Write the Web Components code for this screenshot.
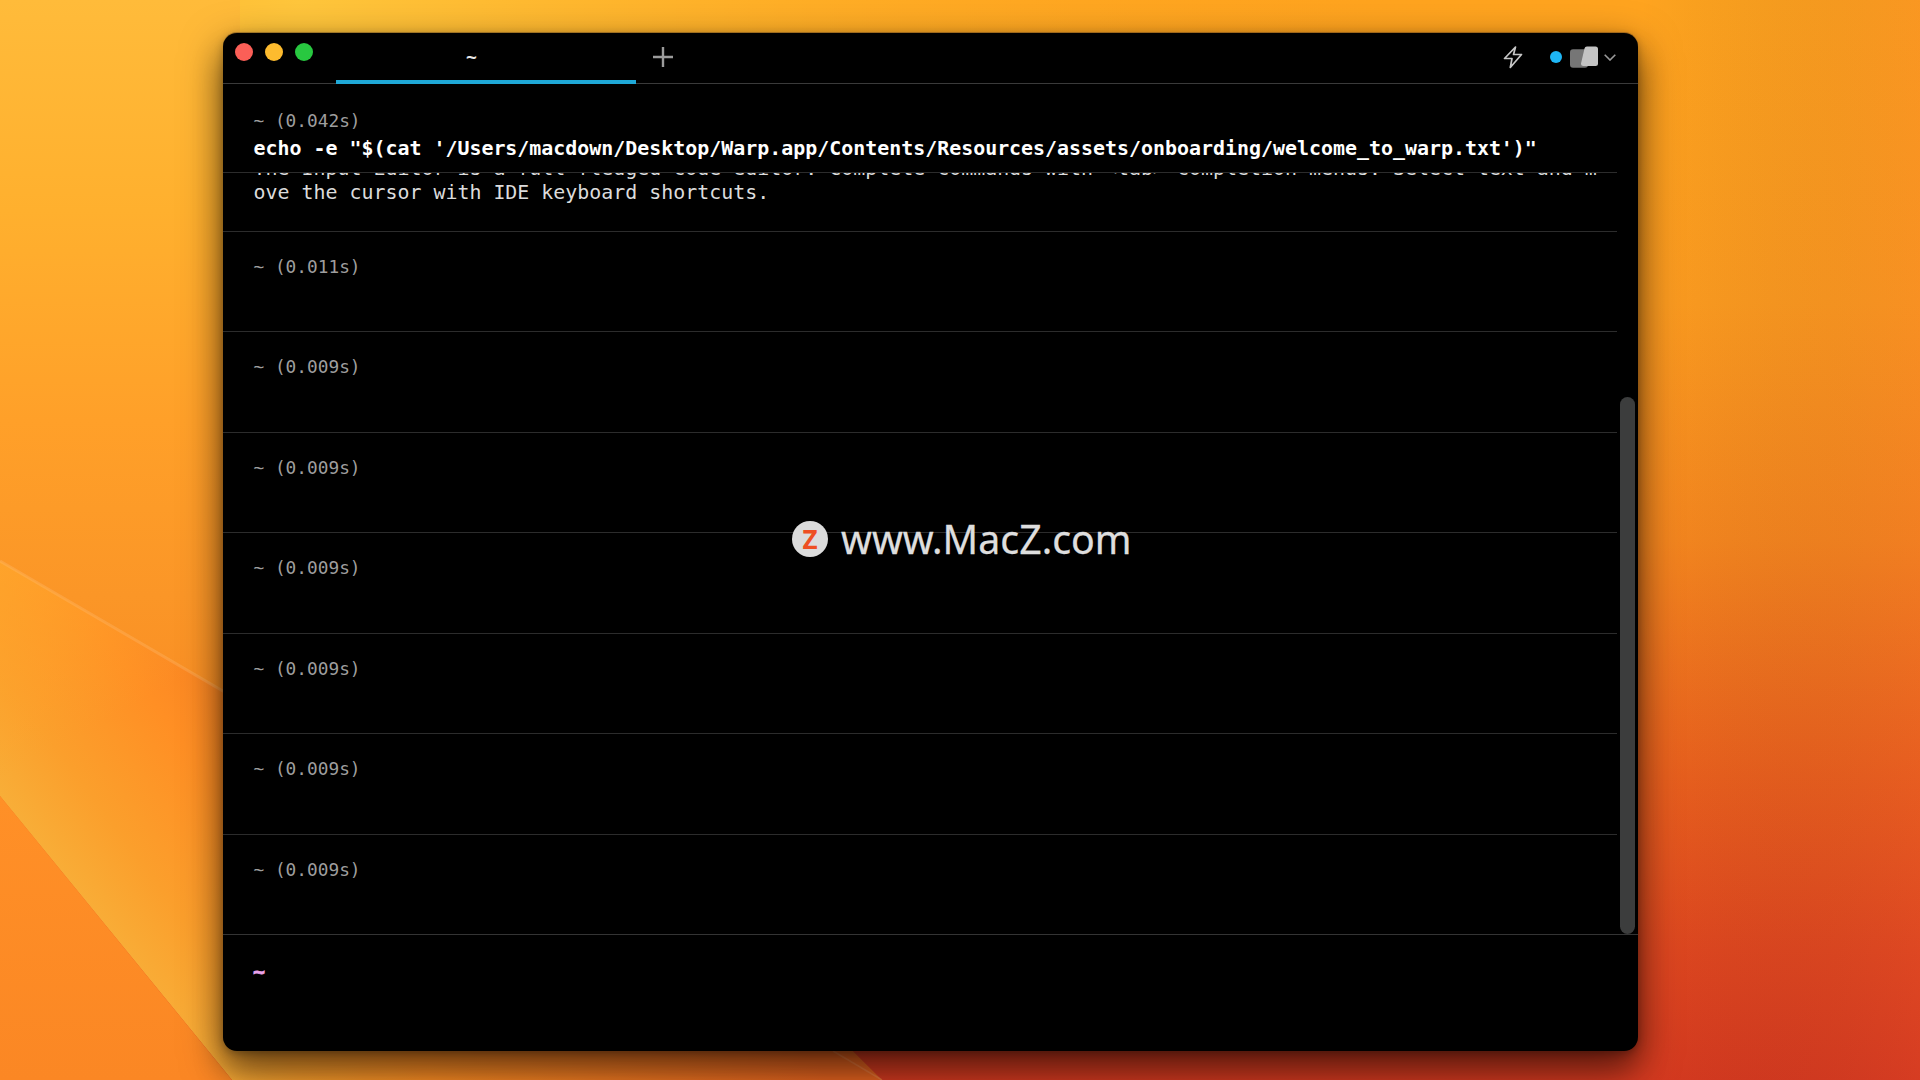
<!DOCTYPE html>
<html lang="en">
<head>
<meta charset="utf-8">
<title>Warp</title>
<style>
  html, body { margin: 0; padding: 0; width: 1920px; height: 1080px; overflow: hidden; background: #f59026; }
</style>
</head>
<body>
<mac-desktop>
  <warp-window>
    <warp-tabbar slot="tabbar" title-text="~"></warp-tabbar>
    <warp-sticky slot="sticky" meta="~ (0.042s)">echo -e "$(cat '/Users/macdown/Desktop/Warp.app/Contents/Resources/assets/onboarding/welcome_to_warp.txt')"</warp-sticky>
    <warp-output>
      <div>The Input Editor is a full-fledged code editor. Complete commands with &lt;tab&gt; completion menus. Select text and m</div>
      <div>ove the cursor with IDE keyboard shortcuts.</div>
    </warp-output>
    <warp-block>~ (0.011s)</warp-block>
    <warp-block>~ (0.009s)</warp-block>
    <warp-block>~ (0.009s)</warp-block>
    <warp-block>~ (0.009s)</warp-block>
    <warp-block>~ (0.009s)</warp-block>
    <warp-block>~ (0.009s)</warp-block>
    <warp-block last>~ (0.009s)</warp-block>
    <warp-input slot="input">~</warp-input>
    <mac-watermark slot="overlay"></mac-watermark>
  </warp-window>
</mac-desktop>
<script>
function def(name, html, attrsFn) {
  customElements.define(name, class extends HTMLElement {
    constructor() {
      super();
      const r = this.attachShadow({ mode: 'open' });
      r.innerHTML = html;
    }
    connectedCallback() { if (attrsFn) attrsFn(this, this.shadowRoot); }
  });
}
const MONO = '"DejaVu Sans Mono", "Liberation Mono", monospace';

def('mac-desktop', `
<style>
  :host { display: block; position: relative; width: 1920px; height: 1080px; overflow: hidden; }
  svg { position: absolute; inset: 0; display: block; }
</style>
<svg width="1920" height="1080" viewBox="0 0 1920 1080" aria-hidden="true">
  <defs>
    <linearGradient id="base" x1="0" y1="0" x2="0" y2="1">
      <stop offset="0" stop-color="#ffa41f"/>
      <stop offset=".28" stop-color="#fd9c20"/>
      <stop offset=".5" stop-color="#f6871f"/>
      <stop offset=".72" stop-color="#ea601e"/>
      <stop offset=".88" stop-color="#df4720"/>
      <stop offset="1" stop-color="#d63a20"/>
    </linearGradient>
    <linearGradient id="rightedge" x1="0" y1="0" x2="1" y2="0">
      <stop offset="0" stop-color="#000" stop-opacity="0"/>
      <stop offset="1" stop-color="#d84a30" stop-opacity=".14"/>
    </linearGradient>
    <radialGradient id="glow" gradientUnits="userSpaceOnUse" cx="300" cy="0" r="1100">
      <stop offset="0" stop-color="#ffc63c"/>
      <stop offset=".45" stop-color="#ffb32a" stop-opacity=".7"/>
      <stop offset="1" stop-color="#ffa41f" stop-opacity="0"/>
    </radialGradient>
    <linearGradient id="r1" x1="0" y1="0" x2="0" y2="1">
      <stop offset="0" stop-color="#ffbb3a"/>
      <stop offset=".3" stop-color="#ffb02e"/>
      <stop offset=".6" stop-color="#ffa029"/>
      <stop offset=".85" stop-color="#fb9627"/>
      <stop offset="1" stop-color="#f98f24"/>
    </linearGradient>
    <linearGradient id="band" gradientUnits="userSpaceOnUse" x1="100" y1="932" x2="502" y2="635">
      <stop offset="0" stop-color="#f8ae38"/>
      <stop offset=".15" stop-color="#fb9f2c"/>
      <stop offset=".36" stop-color="#ff8f24"/>
      <stop offset="1" stop-color="#e8641f"/>
    </linearGradient>
    <linearGradient id="bandtop" gradientUnits="userSpaceOnUse" x1="0" y1="570" x2="90" y2="730">
      <stop offset="0" stop-color="#ffa62b" stop-opacity=".8"/>
      <stop offset="1" stop-color="#ffa62b" stop-opacity="0"/>
    </linearGradient>
    <linearGradient id="r3" x1="0" y1="0" x2="0" y2="1">
      <stop offset="0" stop-color="#ff9027"/>
      <stop offset="1" stop-color="#fb8724"/>
    </linearGradient>
  </defs>
  <rect width="1920" height="1080" fill="url(#base)"/>
  <rect x="1640" width="280" height="1080" fill="url(#rightedge)"/>
  <rect width="1920" height="1080" fill="url(#glow)"/>
  <polygon points="0,0 240,0 240,701 0,561" fill="url(#r1)"/>
  <polygon points="0,561 240,701 700,900 882,1080 232,1080 0,796" fill="url(#band)"/>
  <polygon points="0,561 240,701 240,930 0,796" fill="url(#bandtop)"/>
  <polygon points="0,796 232,1080 0,1080" fill="url(#r3)"/>
  <line x1="0" y1="561" x2="240" y2="701" stroke="#ffc27c" stroke-opacity=".28" stroke-width="3"/>
  <line x1="833" y1="1051" x2="882" y2="1080" stroke="#f08a50" stroke-opacity=".5" stroke-width="1.5"/>
</svg>
<slot></slot>`);

def('warp-window', `
<style>
  :host {
    display: flex; flex-direction: column;
    position: absolute; left: 223px; top: 33px;
    width: 1415px; height: 1018px;
    background: #000; border-radius: 14px;
    box-shadow: 0 -1px 0 rgba(90,60,30,.4), 0 14px 40px rgba(0,0,0,.5), 0 22px 30px rgba(0,0,0,.25), 0 2px 8px rgba(0,0,0,.25);
    color: #fff; font-family: ${MONO}; overflow: hidden;
  }
  .scroll { position: relative; flex: 1 1 0; min-height: 0; overflow: hidden; display: flex; flex-direction: column; }
  .thumb {
    position: absolute; left: 1397px; top: 224px; width: 15px; bottom: 0;
    border-radius: 8px; background: #3c3d3d;
  }
</style>
<slot name="tabbar"></slot>
<slot name="sticky"></slot>
<div class="scroll"><slot></slot><div class="thumb"></div></div>
<slot name="input"></slot>
<slot name="overlay"></slot>`);

def('warp-tabbar', `
<style>
  :host {
    display: flex; align-items: stretch; flex: none; box-sizing: border-box;
    height: 51px; border-bottom: 1px solid #3a3a3a; position: relative;
  }
  .lights { display: flex; gap: 12px; width: 113px; box-sizing: border-box; padding: 10px 0 0 12px; flex: none; }
  .lights i { width: 18px; height: 18px; border-radius: 50%; display: block; }
  .tab {
    width: 300px; height: 51px; box-sizing: border-box; flex: none;
    border-bottom: 4px solid #1fa9d8; padding: 11px 0 0 130px;
    font: bold 18px/26px ${MONO}; color: #e8e8e8;
  }
  .plus { display: flex; align-items: center; padding-left: 17px; height: 48px; flex: none; }
  .spacer { flex: 1; }
  .tools { display: flex; align-items: center; height: 48px; padding-right: 22px; flex: none; }
  svg { display: block; }
  .dot { width: 12px; height: 12px; border-radius: 50%; background: #1eb6f5; margin: 0 8px 0 27px; }
</style>
<div class="lights">
  <i style="background:#fb5f57"></i><i style="background:#fdbb2e"></i><i style="background:#28c840"></i>
</div>
<div class="tab" id="t"></div>
<div class="plus">
  <svg width="20" height="20" viewBox="0 0 20 20"><path d="M10 0v20M0 10h20" stroke="#9b9b9b" stroke-width="2.4"/></svg>
</div>
<div class="spacer"></div>
<div class="tools">
  <svg width="20" height="23" viewBox="0 0 20 23" fill="none"><path d="M12.5 1 1.5 12.5H9L7.3 21.5 18.5 8.5H10.5Z" stroke="#c6c6c6" stroke-width="1.7" stroke-linejoin="round"/></svg>
  <div class="dot"></div>
  <svg width="28" height="22" viewBox="0 0 28 22">
    <rect x="0" y="3.3" width="18" height="18.4" rx="3" fill="#767676"/>
    <path d="M17 0.5H25.5A2.5 2.5 0 0 1 28 3V17.5A2.5 2.5 0 0 1 25.5 20H13.5A2.5 2.5 0 0 1 11 17.5L14.5 2.5A2.5 2.5 0 0 1 17 .5Z" fill="#c4c4c4"/>
  </svg>
  <svg style="margin-left:6px" width="12" height="7" viewBox="0 0 12 7" fill="none"><path d="M.7.8 6 6 11.3.8" stroke="#9a9a9a" stroke-width="1.6"/></svg>
</div>`, (el, r) => { r.getElementById('t').textContent = el.getAttribute('title-text'); });

def('warp-sticky', `
<style>
  :host { display: block; flex: none; box-sizing: border-box; width: 1394px; height: 89px; padding: 25px 30.5px 0; border-bottom: 1px solid #2c2c2c; background: #000; position: relative; z-index: 1; }
  .meta { font: 17.8px/24px ${MONO}; color: #9e9e9e; }
  .cmd { font: bold 19.93px/31px ${MONO}; color: #fff; white-space: pre; }
</style>
<div class="meta" id="m"></div>
<div class="cmd"><slot></slot></div>`, (el, r) => { r.getElementById('m').textContent = el.getAttribute('meta'); });

def('warp-output', `
<style>
  :host { display: block; flex: none; box-sizing: border-box; width: 1394px; padding: 0 30.5px 26px; margin-top: -16px; border-bottom: 1px solid #2c2c2c; font: 19.93px/24px ${MONO}; color: #dcdcdc; white-space: nowrap; }
</style>
<slot></slot>`);

def('warp-block', `
<style>
  :host { display: block; flex: none; box-sizing: border-box; width: 1394px; height: 100.43px; padding: 23px 30.5px 0; border-bottom: 1px solid #2c2c2c; font: 17.8px/24px ${MONO}; color: #9e9e9e; }
  :host([last]) { border-bottom: 0; }
</style>
<slot></slot>`);

def('warp-input', `
<style>
  :host { display: block; flex: none; box-sizing: border-box; height: 117px; padding: 22px 30px 0; border-top: 1px solid #343434; font: bold 20px/28px ${MONO}; color: #e9a2ea; -webkit-text-stroke: .8px #e9a2ea; }
</style>
<slot></slot>`);

def('mac-watermark', `
<style>
  :host { position: absolute; left: 569px; top: 488px; display: flex; align-items: center; gap: 13px; height: 36px; color: #dedede; }
  .badge { width: 36px; height: 36px; border-radius: 50%; background: #dcdcdc; display: flex; align-items: center; justify-content: center; font: bold 26px/1 "Noto Sans", sans-serif; color: #ee4f23; flex: none; }
  .t { font: 39.3px/36px "Noto Sans", sans-serif; white-space: nowrap; -webkit-text-stroke: .3px #dedede; }
</style>
<div class="badge">Z</div><div class="t">www.MacZ.com</div>`);
</script>
</body>
</html>
